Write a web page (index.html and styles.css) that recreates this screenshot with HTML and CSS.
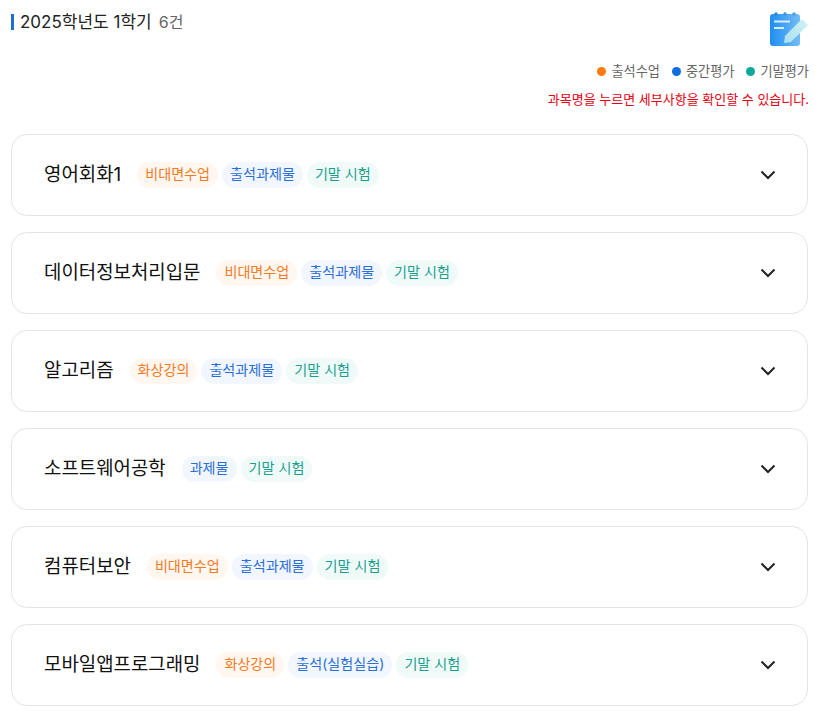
FILE: index.html
```html
<!DOCTYPE html>
<html lang="ko">
<head>
    <meta charset="UTF-8">
    <meta name="viewport" content="width=device-width, initial-scale=1.0">
    <title>수강 과목</title>
    <link rel="stylesheet" href="styles.css">
</head>
<body>
<main class="page">
    <div class="top-row">
      <h2 class="term-title"><span class="term-name">2025학년도 1학기</span> <span class="term-count">6건</span></h2>
      <svg class="note-icon" width="38" height="36" viewBox="0 0 38 36">
        <defs>
          <linearGradient id="noteFill" x1="0" y1="0" x2="1" y2="0">
            <stop offset="0" stop-color="#1f8df2"/>
            <stop offset="1" stop-color="#74bdf6"/>
          </linearGradient>
          <linearGradient id="penFill" x1="0" y1="1" x2="1" y2="0">
            <stop offset="0" stop-color="#a9e0ee"/>
            <stop offset="1" stop-color="#d3f3f3"/>
          </linearGradient>
        </defs>
        <rect x="0" y="2" width="30" height="32" rx="3" fill="url(#noteFill)"/>
        <circle cx="6" cy="2" r="1.7" fill="#2a86d8"/>
        <circle cx="15" cy="2" r="1.7" fill="#3a92e0"/>
        <circle cx="24" cy="2" r="1.7" fill="#4a9ee6"/>
        <rect x="4" y="8.5" width="16" height="2" fill="#d6edfc"/>
        <rect x="4" y="15" width="10" height="2" fill="#d6edfc"/>
        <path d="M14 31 L15 24 L32 7 L38 13 L21 30 Z" fill="url(#penFill)"/>
      </svg>
    </div>

    <div class="legend">
      <span class="legend-item"><i class="dot dot-orange"></i>출석수업</span>
      <span class="legend-item"><i class="dot dot-blue"></i>중간평가</span>
      <span class="legend-item"><i class="dot dot-green"></i>기말평가</span>
    </div>
    <p class="notice">과목명을 누르면 세부사항을 확인할 수 있습니다.</p>

    <div class="course-list">
      <div class="course-card">
        <div class="course-info">
          <span class="course-name">영어회화1</span>
          <span class="tag tag-orange">비대면수업</span>
          <span class="tag tag-blue">출석과제물</span>
          <span class="tag tag-green">기말 시험</span>
        </div>
        <svg class="chevron" width="16" height="10" viewBox="0 0 16 10"><path d="M1.5 1.5 L8 8 L14.5 1.5"/></svg>
      </div>
      <div class="course-card">
        <div class="course-info">
          <span class="course-name">데이터정보처리입문</span>
          <span class="tag tag-orange">비대면수업</span>
          <span class="tag tag-blue">출석과제물</span>
          <span class="tag tag-green">기말 시험</span>
        </div>
        <svg class="chevron" width="16" height="10" viewBox="0 0 16 10"><path d="M1.5 1.5 L8 8 L14.5 1.5"/></svg>
      </div>
      <div class="course-card">
        <div class="course-info">
          <span class="course-name">알고리즘</span>
          <span class="tag tag-orange">화상강의</span>
          <span class="tag tag-blue">출석과제물</span>
          <span class="tag tag-green">기말 시험</span>
        </div>
        <svg class="chevron" width="16" height="10" viewBox="0 0 16 10"><path d="M1.5 1.5 L8 8 L14.5 1.5"/></svg>
      </div>
      <div class="course-card">
        <div class="course-info">
          <span class="course-name">소프트웨어공학</span>
          <span class="tag tag-blue">과제물</span>
          <span class="tag tag-green">기말 시험</span>
        </div>
        <svg class="chevron" width="16" height="10" viewBox="0 0 16 10"><path d="M1.5 1.5 L8 8 L14.5 1.5"/></svg>
      </div>
      <div class="course-card">
        <div class="course-info">
          <span class="course-name">컴퓨터보안</span>
          <span class="tag tag-orange">비대면수업</span>
          <span class="tag tag-blue">출석과제물</span>
          <span class="tag tag-green">기말 시험</span>
        </div>
        <svg class="chevron" width="16" height="10" viewBox="0 0 16 10"><path d="M1.5 1.5 L8 8 L14.5 1.5"/></svg>
      </div>
      <div class="course-card">
        <div class="course-info">
          <span class="course-name">모바일앱프로그래밍</span>
          <span class="tag tag-orange">화상강의</span>
          <span class="tag tag-blue">출석(실험실습)</span>
          <span class="tag tag-green">기말 시험</span>
        </div>
        <svg class="chevron" width="16" height="10" viewBox="0 0 16 10"><path d="M1.5 1.5 L8 8 L14.5 1.5"/></svg>
      </div>
    </div>
</main>
</body>
</html>
```

FILE: styles.css
```css
body {
  font-family: Inter, "Noto Sans CJK KR", sans-serif;
  background-color: #fff;
  margin: 0;
  padding: 0;
}

.page {
  padding: 12px 13px 0 11px;
}

.top-row {
  display: flex;
  justify-content: space-between;
  align-items: flex-start;
  height: 49px;
}

.term-title {
  margin: 2px 0 0;
  padding-left: 6px;
  border-left: 3px solid #1a6fd8;
  font-size: 17px;
  font-weight: 400;
  line-height: 20px;
  height: 16px;
  display: flex;
  align-items: center;
  gap: 7px;
  color: #222;
}

.term-count {
  color: #666;
  font-size: 16px;
}

.legend {
  display: flex;
  justify-content: flex-end;
  gap: 12px;
  margin-right: -1px;
  font-size: 13.2px;
  line-height: 20px;
  color: #666;
  height: 20px;
}

.legend-item {
  display: flex;
  align-items: center;
  gap: 5px;
}

.dot {
  width: 9px;
  height: 9px;
  border-radius: 50%;
}

.dot-orange { background-color: #ff7a0f; }
.dot-blue { background-color: #0f6fe0; }
.dot-green { background-color: #0ea89a; }

.notice {
  margin: 8px -1px 0 0;
  text-align: right;
  font-size: 13px;
  line-height: 20px;
  color: #e60012;
}

.course-list {
  display: flex;
  flex-direction: column;
  gap: 16px;
  margin-top: 25px;
}

.course-card {
  display: flex;
  align-items: center;
  justify-content: space-between;
  height: 82px;
  box-sizing: border-box;
  padding: 0 31px 0 32px;
  border: 1px solid #e4e4e4;
  border-radius: 16px;
  background: #fff;
}

.course-info {
  display: flex;
  align-items: center;
  gap: 4px;
}

.course-name {
  font-size: 18.9px;
  font-weight: 400;
  line-height: 26px;
  color: #111;
  margin-right: 12px;
}

.tag {
  font-size: 14.1px;
  font-weight: 400;
  line-height: 23px;
  padding: 0 8px 3px;
  border-radius: 13px;
}

.tag-orange { color: #f47a1f; background-color: #fff7f0; }
.tag-blue { color: #2a6fd6; background-color: #f2f6fe; }
.tag-green { color: #1a9f8f; background-color: #f0faf9; }

.chevron {
  fill: none;
  stroke: #222;
  stroke-width: 2;
}
```
